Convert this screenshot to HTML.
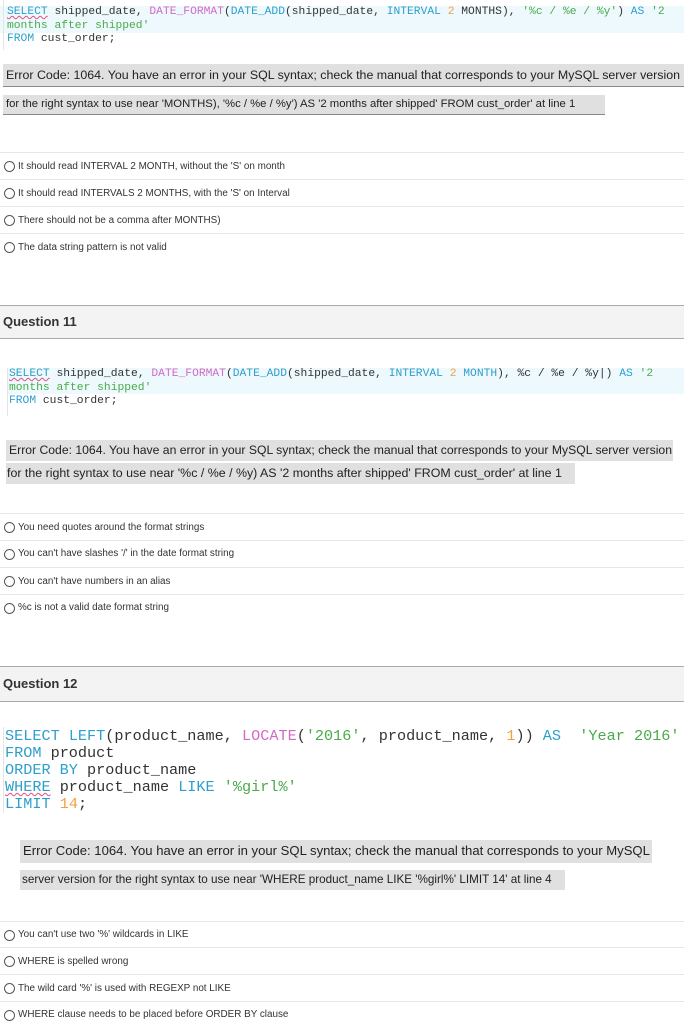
<!DOCTYPE html>
<html><head><meta charset="utf-8"><style>
*{margin:0;padding:0;box-sizing:border-box}
body{width:684px;height:1024px;background:#fff;position:relative;overflow:hidden;font-family:"Liberation Sans",sans-serif}
.a{position:absolute;white-space:pre}
.code{font-family:"Liberation Mono",monospace;font-size:11.3px;color:#333;line-height:13.5px}
.code2{font-family:"Liberation Mono",monospace;font-size:15.2px;color:#333;line-height:17px}
.pk{color:#d36ac6}.bl{color:#2e9fcb}.or{color:#f0a040}.gr{color:#4aaa4a}.sel{color:#2e9fcb;text-decoration:underline wavy #e05080;text-decoration-thickness:1px}
.err{position:absolute;background:#e0e0e0;font-size:12.3px;color:#222;white-space:pre;padding-left:4px}
.opt{position:absolute;left:0;width:684px;border-top:1px solid #e6e6e6;font-size:9.9px;color:#333;white-space:pre}
.opt i{position:absolute;left:4px;width:11px;height:11px;border:1px solid #555;border-radius:50%}
.opt span{position:absolute;left:18px}
.hdr{position:absolute;left:0;width:684px;background:#f3f3f3;border-top:1px solid #aaa;border-bottom:1px solid #aaa;font-size:13px;font-weight:bold;color:#333;padding-left:3px}
</style></head><body>

<div class="a" style="left:0;top:6px;width:684px;height:27px;background:#eef9fd"></div>
<div class="a" style="left:3px;top:0;width:1px;height:50px;background:#e4e4e4"></div>
<div class="a code" style="left:7px;top:6px"><span class="sel">SELECT</span> shipped_date, <span class="pk">DATE_FORMAT</span>(<span class="bl">DATE_ADD</span>(shipped_date, <span class="bl">INTERVAL</span> <span class="or">2</span> MONTHS), <span class="gr">'%c / %e / %y'</span>) <span class="bl">AS</span> <span class="gr">'2</span>
<span class="gr">months after shipped'</span>
<span class="bl">FROM</span> cust_order;</div>

<div class="err" style="left:3px;top:64px;width:681px;height:23px;line-height:22px;border-bottom:1px solid #888;font-size:12.4px;padding-left:3px">Error Code: 1064. You have an error in your SQL syntax; check the manual that corresponds to your MySQL server version</div>
<div class="err" style="left:3px;top:95px;width:602px;height:20px;line-height:19px;border-bottom:1px solid #888;font-size:11.3px;padding-left:3px">for the right syntax to use near 'MONTHS), '%c / %e / %y') AS '2 months after shipped' FROM cust_order' at line 1</div>

<div class="opt" style="top:152px;height:27px"><i style="top:8px"></i><span style="top:8px">It should read INTERVAL 2 MONTH, without the 'S' on month</span></div>
<div class="opt" style="top:179px;height:27px"><i style="top:8px"></i><span style="top:8px">It should read INTERVALS 2 MONTHS, with the 'S' on Interval</span></div>
<div class="opt" style="top:206px;height:27px"><i style="top:8px"></i><span style="top:8px">There should not be a comma after MONTHS)</span></div>
<div class="opt" style="top:233px;height:27px"><i style="top:8px"></i><span style="top:8px">The data string pattern is not valid</span></div>

<div class="hdr" style="top:305px;height:34px;line-height:32px">Question 11</div>

<div class="a" style="left:7px;top:368px;width:677px;height:26px;background:#eef9fd"></div>
<div class="a" style="left:7px;top:368px;width:1px;height:48px;background:#e4e4e4"></div>
<div class="a code" style="left:9px;top:368px"><span class="sel">SELECT</span> shipped_date, <span class="pk">DATE_FORMAT</span>(<span class="bl">DATE_ADD</span>(shipped_date, <span class="bl">INTERVAL</span> <span class="or">2</span> <span class="bl">MONTH</span>), %c / %e / %y|) <span class="bl">AS</span> <span class="gr">'2</span>
<span class="gr">months after shipped'</span>
<span class="bl">FROM</span> cust_order;</div>

<div class="err" style="left:6px;top:440px;width:667px;height:21px;line-height:20px;font-size:12.2px;padding-left:3px">Error Code: 1064. You have an error in your SQL syntax; check the manual that corresponds to your MySQL server version</div>
<div class="err" style="left:6px;top:463px;width:569px;height:21px;line-height:20px;padding-left:1px;font-size:12.4px">for the right syntax to use near '%c / %e / %y) AS '2 months after shipped' FROM cust_order' at line 1</div>

<div class="opt" style="top:513px;height:27px"><i style="top:8px"></i><span style="top:8px">You need quotes around the format strings</span></div>
<div class="opt" style="top:540px;height:27px"><i style="top:8px"></i><span style="top:7px">You can't have slashes '/' in the date format string</span></div>
<div class="opt" style="top:567px;height:27px"><i style="top:8px"></i><span style="top:8px">You can't have numbers in an alias</span></div>
<div class="opt" style="top:594px;height:27px"><i style="top:8px"></i><span style="top:7px">%c is not a valid date format string</span></div>

<div class="hdr" style="top:666px;height:36px;line-height:34px">Question 12</div>

<div class="a" style="left:3px;top:727px;width:1px;height:86px;background:#e4e4e4"></div>
<div class="a code2" style="left:5px;top:728px"><span class="bl">SELECT</span> <span class="bl">LEFT</span>(product_name, <span class="pk">LOCATE</span>(<span class="gr">'2016'</span>, product_name, <span class="or">1</span>)) <span class="bl">AS</span>  <span class="gr">'Year 2016'</span>
<span class="bl">FROM</span> product
<span class="bl">ORDER BY</span> product_name
<span class="sel">WHERE</span> product_name <span class="bl">LIKE</span> <span class="gr">'%girl%'</span>
<span class="bl">LIMIT</span> <span class="or">14</span>;</div>

<div class="err" style="left:20px;top:840px;width:632px;height:23px;line-height:22px;font-size:13.1px;padding-left:3px">Error Code: 1064. You have an error in your SQL syntax; check the manual that corresponds to your MySQL</div>
<div class="err" style="left:20px;top:870px;width:545px;height:20px;line-height:20px;font-size:11.7px;padding-left:2px">server version for the right syntax to use near 'WHERE product_name LIKE '%girl%' LIMIT 14' at line 4</div>

<div class="opt" style="top:921px;height:26px"><i style="top:8px"></i><span style="top:7px">You can't use two '%' wildcards in LIKE</span></div>
<div class="opt" style="top:947px;height:27px"><i style="top:8px"></i><span style="top:8px">WHERE is spelled wrong</span></div>
<div class="opt" style="top:974px;height:27px"><i style="top:8px"></i><span style="top:8px">The wild card '%' is used with REGEXP not LIKE</span></div>
<div class="opt" style="top:1001px;height:23px"><i style="top:8px"></i><span style="top:7px">WHERE clause needs to be placed before ORDER BY clause</span></div>

</body></html>
